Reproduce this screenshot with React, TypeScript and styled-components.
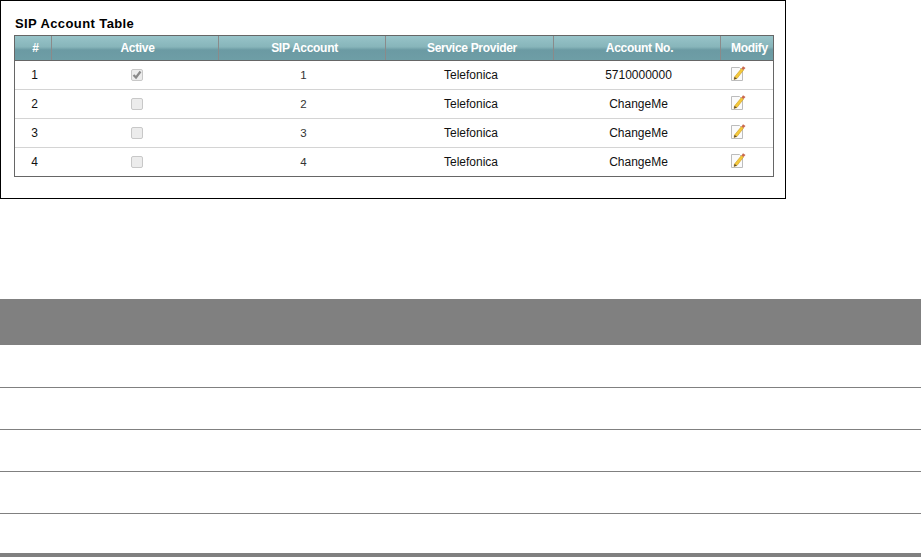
import styled, { createGlobalStyle } from 'styled-components';

const GlobalStyle = createGlobalStyle`
	html, body {
		margin: 0;
		padding: 0;
		background: #fff;
		font-family: 'Liberation Sans', Arial, sans-serif;
	}
`;

const Page = styled.div`
	width: 921px;
	height: 557px;
	overflow: hidden;
	display: flex;
	flex-direction: column;
`;

const Frame = styled.div`
	box-sizing: border-box;
	width: 786px;
	height: 199px;
	border: 1px solid #000;
	padding: 15px 11px 0 13px;
`;

const Title = styled.h2`
	margin: 0 0 0 1px;
	height: 19px;
	line-height: 15px;
	font-size: 13px;
	font-weight: 700;
	letter-spacing: 0.4px;
	color: #000;
`;

const AccountTable = styled.div`
	border: 1px solid #666;
`;

const columns = '37px 167px 167px 168px 167px 52px';

const HeaderRow = styled.div`
	display: grid;
	grid-template-columns: ${columns};
	height: 24px;
	background: linear-gradient(#98c4c9 0%, #87b5ba 45%, #6b9aa3 58%, #6e9ea6 100%);
	border-bottom: 1px solid #666;
`;

const HeaderCell = styled.div<{ $last?: boolean }>`
	box-sizing: border-box;
	display: flex;
	align-items: center;
	justify-content: center;
	padding-left: 5px;
	font-size: 12px;
	letter-spacing: -0.3px;
	font-weight: 700;
	white-space: nowrap;
	color: #fff;
	border-right: ${(p) => (p.$last ? '0' : '1px solid #8a8a8a')};
`;

const Row = styled.div<{ $last?: boolean }>`
	display: grid;
	grid-template-columns: ${columns};
	height: 28px;
	border-bottom: ${(p) => (p.$last ? '0' : '1px solid #d4d4d4')};
`;

const Cell = styled.div<{ $narrow?: boolean }>`
	box-sizing: border-box;
	display: flex;
	align-items: center;
	justify-content: center;
	padding-left: 2px;
	font-size: ${(p) => (p.$narrow ? '11.5px' : '12px')};
	color: ${(p) => (p.$narrow ? '#333' : '#111')};
`;

const CheckBox = styled.span`
	box-sizing: border-box;
	width: 12px;
	height: 12px;
	border: 1px solid #c8c8c8;
	border-radius: 2px;
	background: #ececec;
	display: flex;
	align-items: center;
	justify-content: center;
	margin-bottom: 1px;
`;

const IconCell = styled(Cell)`
	padding-left: 0;
	padding-right: 17px;
	padding-bottom: 5px;
`;

const GreyTable = styled.div`
	margin-top: 100px;
	display: flex;
	flex-direction: column;
`;

const GreyHeader = styled.div`
	height: 46px;
	background: #808080;
`;

const GreyRow = styled.div<{ $first?: boolean }>`
	box-sizing: border-box;
	height: ${(p) => (p.$first ? '43px' : '42px')};
	border-bottom: 1px solid #808080;
`;

const GreyLastRow = styled.div`
	height: 39px;
	border-bottom: 4px solid #808080;
`;

function EditIcon() {
	return (
		<svg width="15" height="16" viewBox="0 0 15 16">
			<path d="M0.5 2.5H8.5L11.5 5.5V15.5H0.5Z" fill="#fbfbfb" stroke="#bcbcbc" />
			<path d="M3.5 12L10.5 3.5L12.5 5L6 13.5L3 14.5Z" fill="#f5c93a" stroke="#c99a20" strokeWidth="0.6" />
			<path d="M10.5 3.5L12 1.2L14.5 3L12.5 5Z" fill="#c9684f" />
			<path d="M3.5 12L6 13.5L3 14.5Z" fill="#5a4a30" />
		</svg>
	);
}

const rows = [
	{ id: 1, active: true, account: '5710000000' },
	{ id: 2, active: false, account: 'ChangeMe' },
	{ id: 3, active: false, account: 'ChangeMe' },
	{ id: 4, active: false, account: 'ChangeMe' },
];

export default function App() {
	return (
		<Page>
			<GlobalStyle />
			<Frame>
				<Title>SIP Account Table</Title>
				<AccountTable>
					<HeaderRow>
						<HeaderCell>#</HeaderCell>
						<HeaderCell>Active</HeaderCell>
						<HeaderCell>SIP Account</HeaderCell>
						<HeaderCell>Service Provider</HeaderCell>
						<HeaderCell>Account No.</HeaderCell>
						<HeaderCell $last>Modify</HeaderCell>
					</HeaderRow>
					{rows.map((row, i) => (
						<Row key={row.id} $last={i === rows.length - 1}>
							<Cell>{row.id}</Cell>
							<Cell>
								<CheckBox>
									{row.active && (
										<svg width="10" height="10" viewBox="0 0 10 10">
											<path d="M1.5 5L4 7.5L8.5 1.5" fill="none" stroke="#8a8a8a" strokeWidth="2.2" />
										</svg>
									)}
								</CheckBox>
							</Cell>
							<Cell $narrow>{row.id}</Cell>
							<Cell>Telefonica</Cell>
							<Cell>{row.account}</Cell>
							<IconCell>
								<EditIcon />
							</IconCell>
						</Row>
					))}
				</AccountTable>
			</Frame>
			<GreyTable>
				<GreyHeader />
				<GreyRow $first />
				<GreyRow />
				<GreyRow />
				<GreyRow />
				<GreyLastRow />
			</GreyTable>
		</Page>
	);
}
